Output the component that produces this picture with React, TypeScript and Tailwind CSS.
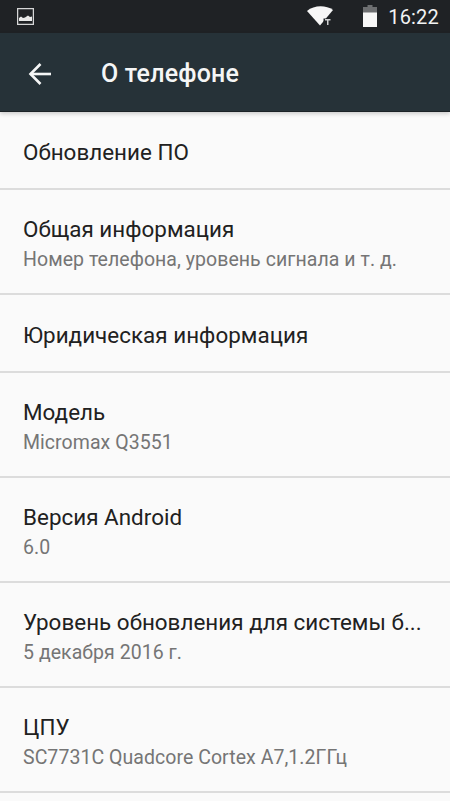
const rows = [
  { title: 'Обновление ПО', h: 'h-[78px]' },
  { title: 'Общая информация', sub: 'Номер телефона, уровень сигнала и т. д.', h: 'h-[105px]' },
  { title: 'Юридическая информация', h: 'h-[78px]' },
  { title: 'Модель', sub: 'Micromax Q3551', h: 'h-[105px]' },
  { title: 'Версия Android', sub: '6.0', h: 'h-[105px]' },
  { title: 'Уровень обновления для системы б...', sub: '5 декабря 2016 г.', h: 'h-[105px]' },
  { title: 'ЦПУ', sub: 'SC7731C Quadcore Cortex A7,1.2ГГц', h: 'h-[105px]' },
]

function StatusBar() {
  return (
    <div className="h-[33px] bg-[#1f2225] flex items-center pl-[17px] pr-[11px] text-[#f2f3f3]">
      <svg width="17" height="17" viewBox="0 0 17 17" className="mb-[1px]">
        <rect x="0.6" y="0.6" width="15.8" height="15.8" fill="none" stroke="#d5d6d7" strokeWidth="1.3" />
        <path d="M2 13 L2 10 L4 8.5 L6 10 L8 9.5 L11 7.5 L13 9 L15 8.5 L15 13 Z" fill="#e8e9e9" />
      </svg>
      <div className="flex-1" />
      <svg width="26" height="20" viewBox="0 0 26 20" className="mr-[30px] mb-[1px]">
        <path d="M0 5 C7 -1 19 -1 26 4 L13 19.5 Z" fill="#f7f7f7" />
        <path d="M16.5 12.5 H26 V20 H16.5 Z" fill="#1f2225" />
        <path d="M18 13 h5.5 v1.5 h-2 v4.5 h-1.5 v-4.5 h-2 Z" fill="#cfd0d1" />
      </svg>
      <svg width="14" height="22" viewBox="0 0 14 22" className="mr-[11px] mb-[1px]">
        <path d="M4.5 0 h5 v2 h4.5 v20 h-14 v-20 h4.5 Z" fill="#6d6f71" />
        <rect x="0" y="7.5" width="14" height="14.5" fill="#f7f7f7" />
      </svg>
      <span className="font-['Roboto',sans-serif] text-[20px] leading-none tracking-[0.2px]">16:22</span>
    </div>
  )
}

function Toolbar() {
  return (
    <div className="h-[79px] bg-[#263238] flex items-center pl-[28px] pt-[3px] border-b border-[#1b2226] shadow-[0_2px_4px_rgba(0,0,0,0.18)] relative">
      <svg width="24" height="24" viewBox="0 0 24 24" fill="none" stroke="#f5f6f6" strokeWidth="2.6">
        <path d="M23 12 H2.5" />
        <path d="M12.5 2 L2.5 12 L12.5 22" />
      </svg>
      <span className="ml-[49px] text-[25px] leading-none text-[#f5f6f6] font-['Roboto',sans-serif] font-medium tracking-[0.2px]">О телефоне</span>
    </div>
  )
}

export default function App() {
  return (
    <div className="w-[450px] h-[801px] overflow-hidden bg-[#fafafa] font-['Roboto',sans-serif]">
      <StatusBar />
      <Toolbar />
      {rows.map(r => (
        <div key={r.title} className={`${r.h} ${r.sub ? 'pt-[6px]' : 'pt-[3px]'} px-[23px] flex flex-col justify-center border-b-2 border-[#dcdcdc]`}>
          <div className="text-[22.4px] leading-[28px] text-[#212121] tracking-[0.03px] whitespace-nowrap">{r.title}</div>
          {r.sub && <div className="mt-[2px] text-[19.5px] leading-[30px] text-[#757575] tracking-[0.05px] whitespace-nowrap">{r.sub}</div>}
        </div>
      ))}
    </div>
  )
}
